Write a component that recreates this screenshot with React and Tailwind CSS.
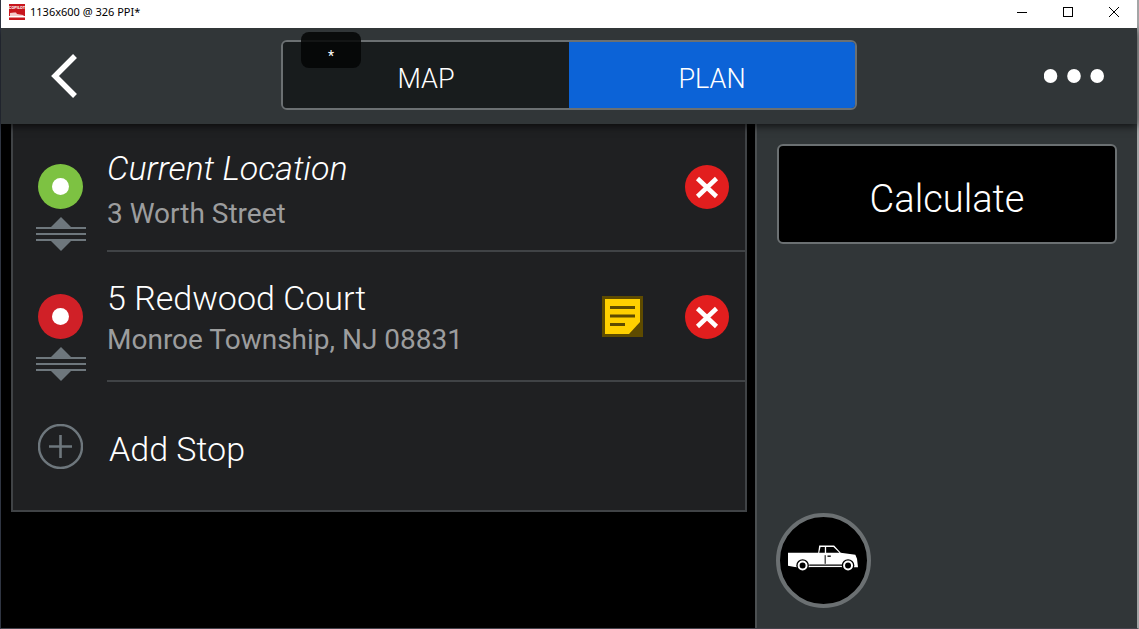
import { useState } from 'react';

const initialStops = [
    { id: 1, title: 'Current Location', address: '3 Worth Street', start: true, note: false },
    { id: 2, title: '5 Redwood Court', address: 'Monroe Township, NJ 08831', start: false, note: true },
];

function AppLogo() {
    return (
        <svg className="w-4 h-4" viewBox="0 0 16 16" aria-hidden="true">
            <rect width="16" height="16" fill="#c8151d" />
            <text x="8" y="5" fontSize="4" fontWeight="bold" fill="#fff" textAnchor="middle" fontFamily="Roboto, sans-serif">COPILOT</text>
            <path d="M1 10.500V9L5 8.500H7L8 10L11 10.500L14 11L15 12V13H1Z" fill="#f6c9cb" />
            <path d="M0 12H16V13.500H0Z" fill="#fff" />
        </svg>
    );
}

function TitleBar() {
    return (
        <div className="relative z-20 h-7 bg-white text-black flex items-center justify-between">
            <div className="flex items-center gap-[5px] pl-2 pb-1">
                <AppLogo />
                <span className="text-[11px] leading-4 font-['Noto_Sans',sans-serif]">1136x600 @ 326 PPI*</span>
            </div>
            <div className="flex self-start">
                <button aria-label="Minimize" className="w-[46px] h-6 flex items-center justify-center">
                    <svg width="10" height="10" viewBox="0 0 10 10" shapeRendering="crispEdges"><path d="M0 5.500H10" stroke="#000" /></svg>
                </button>
                <button aria-label="Maximize" className="w-[46px] h-6 flex items-center justify-center">
                    <svg width="10" height="10" viewBox="0 0 10 10" shapeRendering="crispEdges"><path d="M.5.5H9.500V9.500H.5Z" fill="none" stroke="#000" /></svg>
                </button>
                <button aria-label="Close" className="w-[46px] h-6 flex items-center justify-center">
                    <svg width="10" height="10" viewBox="0 0 10 10"><path d="M0 0L10 10M10 0L0 10" stroke="#000" /></svg>
                </button>
            </div>
        </div>
    );
}

function Header({ tab, setTab }) {
    return (
        <header className="relative z-10 h-24 bg-[#313638] grid grid-cols-[1fr_576px_1fr] items-center shadow-[0_2px_8px_rgba(0,0,0,0.7)]">
            <button aria-label="Back" className="justify-self-start pl-[50px]">
                <svg width="28" height="44" viewBox="0 0 28 44">
                    <path d="M24 2L4 22L24 42" fill="none" stroke="#fff" strokeWidth="5.500" />
                </svg>
            </button>

            <div className="relative">
                <div className="h-[70px] mt-[-2px] grid grid-cols-2 border-2 border-[#6b7072] rounded-md overflow-hidden text-[27px] font-light">
                    <button
                        onClick={() => setTab('map')}
                        className={tab === 'map' ? 'bg-[#0c63d7] pt-2' : 'bg-[#181c1d] pt-2'}
                    >
                        MAP
                    </button>
                    <button
                        onClick={() => setTab('plan')}
                        className={tab === 'plan' ? 'bg-[#0c63d7] pt-2' : 'bg-[#181c1d] pt-2'}
                    >
                        PLAN
                    </button>
                </div>
                <div className="absolute left-5 -top-2.5 w-[60px] h-9 rounded-lg bg-[#040505]/85 pt-3 flex items-center justify-center text-sm">
                    *
                </div>
            </div>

            <button aria-label="More" className="justify-self-end pr-[33px]">
                <svg width="60" height="14" viewBox="0 0 60 14" fill="#fff">
                    <ellipse cx="6.500" cy="7" rx="6.800" ry="7" />
                    <ellipse cx="30" cy="7" rx="6.800" ry="7" />
                    <ellipse cx="53.200" cy="7" rx="6.800" ry="7" />
                </svg>
            </button>
        </header>
    );
}

function DragHandle() {
    return (
        <svg width="50" height="34" viewBox="0 0 50 34" fill="#6e777d" aria-hidden="true">
            <path d="M25 0L35 10H15Z" />
            <rect y="10" width="50" height="2" />
            <rect y="16" width="50" height="2" />
            <rect y="22" width="50" height="2" />
            <path d="M15 24H35L25 34Z" />
        </svg>
    );
}

function NoteIcon() {
    return (
        <svg width="41" height="41" viewBox="0 0 41 41">
            <rect width="41" height="41" fill="#5e4b00" />
            <path d="M3 3H38V26L27 38H3Z" fill="#ffd000" />
            <path d="M8 11.500H33M8 20H33M8 28.500H23" stroke="#5e4b00" strokeWidth="3" />
        </svg>
    );
}

function StopRow({ stop, onRemove }) {
    return (
        <li className="flex h-[130px] pl-[23px]">
            <div className="w-[50px] pt-[42px] flex flex-col items-start gap-2 shrink-0">
                <svg width="45" height="45" viewBox="0 0 45 45" className="shrink-0 ml-0.5">
                    <circle cx="22.500" cy="22.500" r="22.500" fill={stop.start ? '#7dc242' : '#d02027'} />
                    <circle cx="22.500" cy="22.500" r="8.500" fill="#fff" />
                </svg>
                <button aria-label="Reorder stop"><DragHandle /></button>
            </div>

            <div className="flex-1 min-w-0 ml-[21px] flex border-b-2 border-[#404346]">
                <div className="flex-1 min-w-0 pt-6">
                    <p className={stop.start ? 'text-[34px] leading-[44px] font-light italic truncate' : 'text-[34px] leading-[44px] font-light truncate'}>
                        {stop.title}
                    </p>
                    <p className={stop.start ? 'mt-1 text-[28px] leading-10 text-[#9c9d9e] truncate' : 'text-[28px] leading-10 text-[#9c9d9e] truncate'}>
                        {stop.address}
                    </p>
                </div>
                <div className="flex items-center gap-[42px] pr-4">
                    {stop.note && (
                        <button aria-label="Note"><NoteIcon /></button>
                    )}
                    <button aria-label="Remove stop" onClick={onRemove} className="pt-0.5">
                        <svg width="44" height="44" viewBox="0 0 44 44">
                            <circle cx="22" cy="22" r="22" fill="#e21e1e" />
                            <path d="M12.500 13.500L31.500 31.500M31.500 13.500L12.500 31.500" stroke="#fff" strokeWidth="4.500" />
                        </svg>
                    </button>
                </div>
            </div>
        </li>
    );
}

function TruckIcon() {
    return (
        <svg width="70" height="27" viewBox="84 137 211 80">
            <path d="M84 160H175L178 138H223L243 160L287 166L292 178L295 203H84Z" fill="#fff" />
            <path d="M182 142H195V160H178ZM199 142H221L239 160H199Z" fill="#000" />
            <path d="M196 167V193" stroke="#000" strokeWidth="3" />
            <path d="M203 170H213" stroke="#000" strokeWidth="4" />
            <path d="M148 197H247" stroke="#000" strokeWidth="4" />
            <path d="M84 199L108 203V206H84ZM149 203H246V206H149Z" fill="#000" />
            <circle cx="128" cy="198" r="19" fill="#000" />
            <circle cx="265" cy="198" r="19" fill="#000" />
            <circle cx="128" cy="198" r="12" fill="#000" stroke="#fff" strokeWidth="6" />
            <circle cx="265" cy="198" r="12" fill="#000" stroke="#fff" strokeWidth="6" />
        </svg>
    );
}

function App() {
    const [tab, setTab] = useState('plan');
    const [stops, setStops] = useState(initialStops);

    const removeStop = (id) => setStops(stops.filter((s) => s.id !== id));

    return (
        <div className="min-h-screen flex flex-col bg-black text-white font-[Roboto,sans-serif] border-l border-l-[#2f3542] border-r-2 border-r-[#a3a5a6] border-b border-b-[#45434c]">
            <TitleBar />
            <Header tab={tab} setTab={setTab} />

            <main className="flex-1 flex gap-2 pl-2.5 -mt-0.5">
                <section className="flex-1 min-w-0">
                    <ul className="bg-[#1f2022] border-x-2 border-[#404346]">
                        {stops.map((stop) => (
                            <StopRow key={stop.id} stop={stop} onRemove={() => removeStop(stop.id)} />
                        ))}
                        <li className="border-b-2 border-[#404346]">
                            <button className="w-full h-32 pl-[25px] flex items-center gap-[26px] text-left">
                                <svg width="45" height="45" viewBox="0 0 45 45" fill="none" stroke="#6e777d" strokeWidth="2">
                                    <circle cx="22.500" cy="22.500" r="21.500" strokeWidth="2.400" />
                                    <path d="M11 22.500H34M22.500 11V34" strokeWidth="2.600" />
                                </svg>
                                <span className="pt-1.5 text-[34px] leading-[44px] font-light">Add Stop</span>
                            </button>
                        </li>
                    </ul>
                </section>

                <aside className="w-[382px] shrink-0 bg-[#313638] border-l-2 border-[#4c5052] flex flex-col items-start justify-between px-5 pt-[22px] pb-5">
                    <button className="w-full h-[100px] pt-2.5 bg-black border-2 border-[#6b7072] rounded-md text-[38px] font-light">
                        Calculate
                    </button>
                    <button aria-label="Vehicle" className="w-[95px] h-[95px] -ml-px rounded-full bg-black border-4 border-[#6b7072] flex items-center justify-center pr-0.5 pb-1">
                        <TruckIcon />
                    </button>
                </aside>
            </main>
        </div>
    );
}

export default App;
